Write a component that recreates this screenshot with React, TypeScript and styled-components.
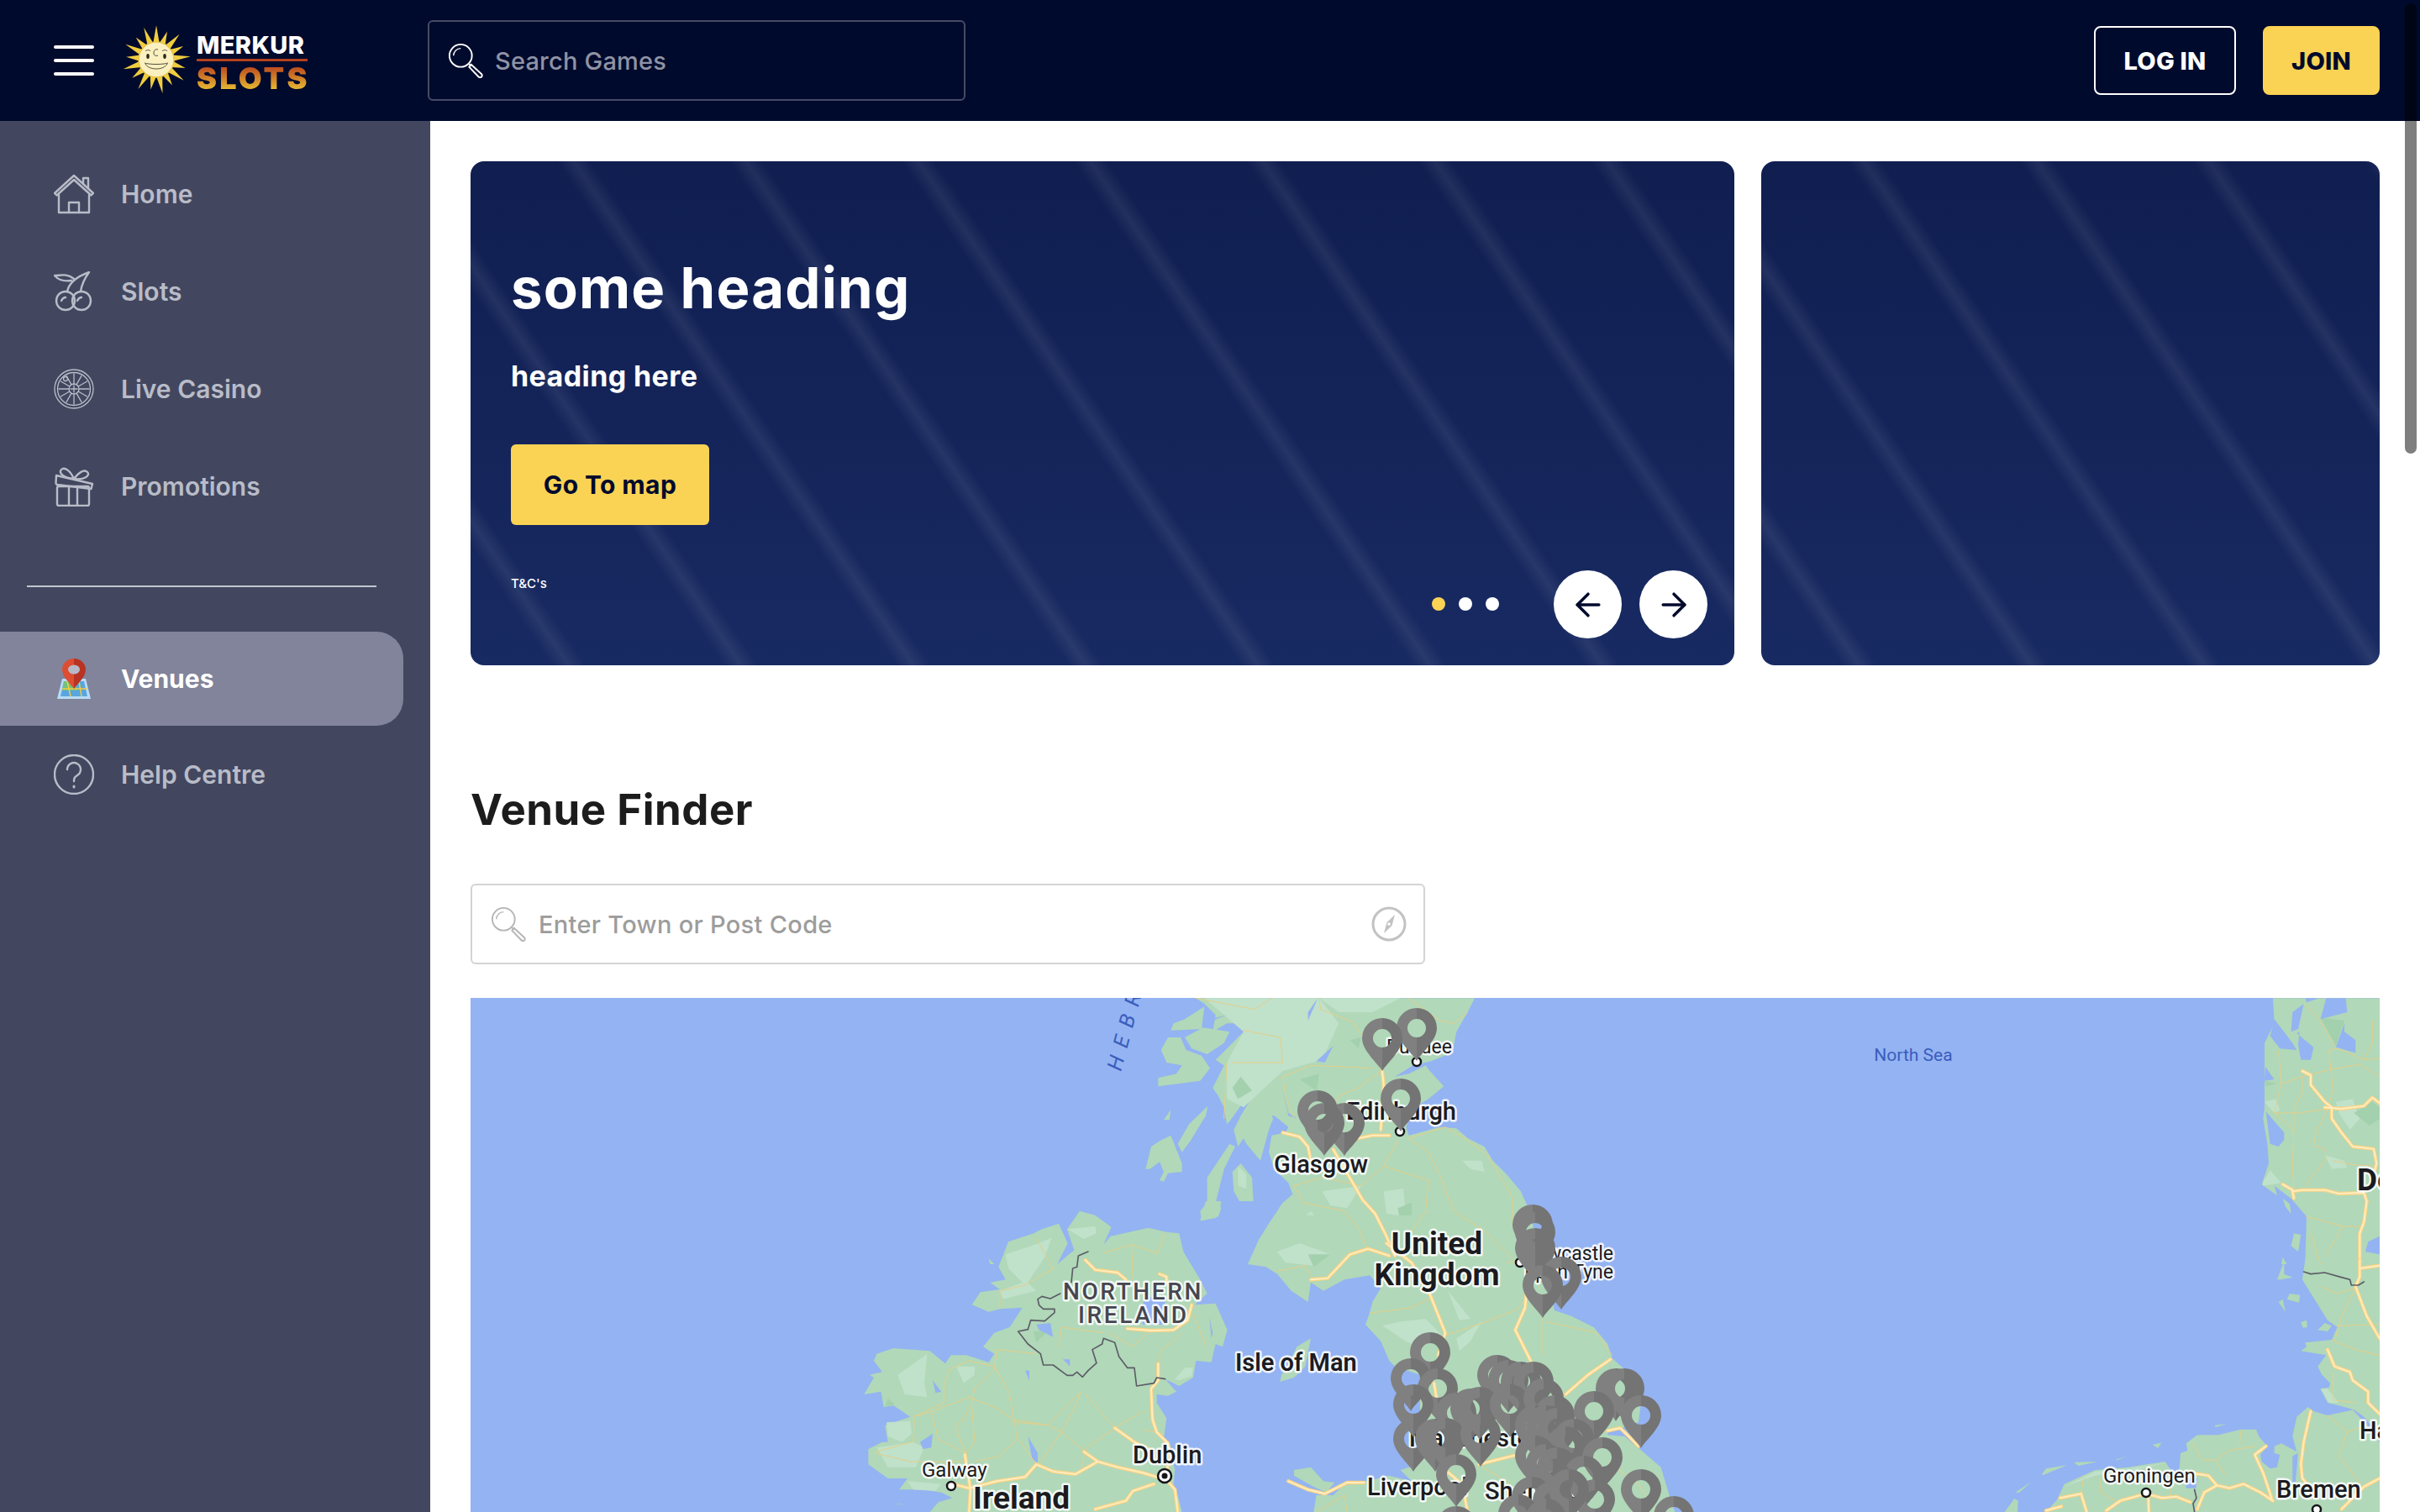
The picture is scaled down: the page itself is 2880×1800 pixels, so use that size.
import styled, { createGlobalStyle } from 'styled-components';
import { ArrowLeft, ArrowRight } from 'lucide-react';

const GlobalStyle = createGlobalStyle`
  html, body {
    margin: 0;
    padding: 0;
    width: 2880px;
    height: 1800px;
    overflow: hidden;
    background: #fff;
    font-family: Inter, "Liberation Sans", sans-serif;
  }
  * { box-sizing: border-box; }
`;

const Page = styled.div`
  position: relative;
  width: 2880px;
  height: 1800px;
  display: flex;
  flex-direction: column;
  overflow: hidden;
`;

const Header = styled.header`
  height: 144px;
  flex: none;
  background: #000a2c;
  display: flex;
  align-items: center;
  padding: 0 48px 0 64px;
`;

const Burger = styled.div`
  width: 48px;
  display: flex;
  flex-direction: column;
  gap: 12px;
  margin-right: 32px;
`;

const BurgerLine = styled.span`
  height: 4px;
  border-radius: 2px;
  background: #fff;
`;

const Logo = styled.div`
  display: flex;
  align-items: center;
  gap: 6px;
  width: 365px;
`;

const LogoWords = styled.div`
  display: flex;
  flex-direction: column;
  width: 132px;
  padding-top: 4px;
`;

const LogoTop = styled.span`
  color: #fff;
  font-size: 29px;
  line-height: 26px;
  font-weight: 800;
  letter-spacing: 0.4px;
  white-space: nowrap;
`;

const LogoRule = styled.span`
  height: 3px;
  margin: 3px 0 6px;
  background: #b5401c;
`;

const LogoBottom = styled.span`
  font-size: 36px;
  line-height: 28px;
  font-weight: 900;
  letter-spacing: 3.2px;
  white-space: nowrap;
  background: linear-gradient(180deg, #b9481f 0%, #e8bb33 100%);
  -webkit-background-clip: text;
  background-clip: text;
  color: transparent;
`;

const HeaderSearch = styled.div`
  width: 640px;
  height: 96px;
  border: 2px solid #474c66;
  border-radius: 6px;
  display: flex;
  align-items: center;
  gap: 14px;
  padding-left: 22px;
`;

const HeaderSearchText = styled.span`
  color: #8f93a5;
  font-size: 29px;
  font-weight: 500;
  letter-spacing: 0.2px;
`;

const HeaderActions = styled.div`
  margin-left: auto;
  display: flex;
  gap: 32px;
`;

const HeaderButton = styled.div<{ $primary?: boolean }>`
  height: 82px;
  width: ${(p) => (p.$primary ? '139px' : '169px')};
  border-radius: 8px;
  display: flex;
  align-items: center;
  justify-content: center;
  font-size: 29px;
  font-weight: 800;
  letter-spacing: 0.2px;
  background: ${(p) => (p.$primary ? '#fad355' : 'transparent')};
  color: ${(p) => (p.$primary ? '#000a2c' : '#fff')};
  border: 2px solid ${(p) => (p.$primary ? '#fad355' : '#fff')};
`;

const Body = styled.div`
  flex: 1;
  display: flex;
  min-height: 0;
`;

const Sidebar = styled.nav`
  width: 512px;
  flex: none;
  background: #42475f;
  padding-top: 29px;
`;

const NavItem = styled.div<{ $active?: boolean }>`
  height: ${(p) => (p.$active ? '112px' : '116px')};
  width: 480px;
  padding-left: 64px;
  display: flex;
  align-items: center;
  gap: 32px;
  font-size: 30px;
  font-weight: ${(p) => (p.$active ? 700 : 600)};
  color: ${(p) => (p.$active ? '#fff' : '#b9bcc8')};
  background: ${(p) => (p.$active ? '#81849a' : 'transparent')};
  border-radius: ${(p) => (p.$active ? '0 32px 32px 0' : '0')};
`;

const NavIcon = styled.svg`
  width: 48px;
  height: 48px;
  flex: none;
  fill: none;
  stroke: #b9bcc8;
  stroke-width: 2.4;
  stroke-linejoin: round;
  stroke-linecap: round;
`;

const NavDivider = styled.div`
  height: 2px;
  width: 416px;
  margin: 60px 0 53px 32px;
  background: #c3c5d0;
`;

const Main = styled.main`
  flex: 1;
  min-width: 0;
  display: flex;
  flex-direction: column;
  padding: 48px 48px 0;
`;

const BannerRow = styled.section`
  display: flex;
  gap: 32px;
  height: 600px;
  flex: none;
`;

const Banner = styled.div<{ $wide?: boolean }>`
  position: relative;
  flex: ${(p) => (p.$wide ? '0 0 1504px' : '1')};
  border-radius: 16px;
  overflow: hidden;
  padding: 0 48px;
  color: #fff;
  background:
    repeating-linear-gradient(
      56deg,
      rgba(255, 255, 255, 0) 0,
      rgba(255, 255, 255, 0) 80px,
      rgba(255, 255, 255, 0.075) 97px,
      rgba(255, 255, 255, 0) 114px,
      rgba(255, 255, 255, 0) 170px
    ),
    linear-gradient(180deg, #101e50 0%, #182a62 100%);
`;

const BannerTitle = styled.h1`
  margin: 0;
  padding-top: 108px;
  font-size: 67px;
  line-height: 86px;
  font-weight: 700;
  letter-spacing: 1.2px;
`;

const BannerSub = styled.h2`
  margin: 42px 0 0;
  font-size: 34px;
  line-height: 40px;
  font-weight: 700;
  letter-spacing: 0.4px;
`;

const BannerButton = styled.div`
  margin-top: 61px;
  width: 236px;
  height: 96px;
  border-radius: 6px;
  background: #fad355;
  color: #000a2c;
  font-size: 30px;
  font-weight: 700;
  letter-spacing: 0.4px;
  display: flex;
  align-items: center;
  justify-content: center;
`;

const BannerTerms = styled.p`
  margin: 60px 0 0;
  font-size: 15px;
  line-height: 20px;
  font-weight: 500;
`;

const Dots = styled.div`
  position: absolute;
  left: 1144px;
  top: 519px;
  display: flex;
  gap: 16px;
`;

const Dot = styled.span<{ $on?: boolean }>`
  width: 16px;
  height: 16px;
  border-radius: 50%;
  background: ${(p) => (p.$on ? '#fad355' : '#fff')};
`;

const Arrows = styled.div`
  position: absolute;
  right: 32px;
  top: 487px;
  display: flex;
  gap: 21px;
`;

const ArrowButton = styled.div`
  width: 81px;
  height: 81px;
  border-radius: 50%;
  background: #fff;
  color: #000a2c;
  display: flex;
  align-items: center;
  justify-content: center;
`;

const SectionTitle = styled.h2`
  margin: 142px 0 0;
  font-size: 51px;
  line-height: 60px;
  font-weight: 700;
  letter-spacing: 0.5px;
  color: #1c1c1c;
`;

const FinderInput = styled.div`
  margin-top: 58px;
  width: 1136px;
  height: 96px;
  flex: none;
  border: 2px solid #d3d3d3;
  border-radius: 6px;
  display: flex;
  align-items: center;
  padding: 0 20px 0 22px;
  gap: 15px;
`;

const FinderText = styled.span`
  flex: 1;
  color: #9c9c9c;
  font-size: 29px;
  font-weight: 500;
  letter-spacing: 0.3px;
`;

const MapFrame = styled.div`
  margin-top: 40px;
  flex: 1;
  min-height: 0;
  overflow: hidden;
  background: #94b3f2;
`;

const MapSvg = styled.svg`
  display: block;
  width: 2272px;
  height: 612px;
`;

const MapLabel = styled.text<{ $size: number; $weight?: number; $color?: string; $spacing?: number }>`
  font-family: Roboto, "Liberation Sans", sans-serif;
  font-size: ${(p) => p.$size}px;
  font-weight: ${(p) => p.$weight ?? 500};
  fill: ${(p) => p.$color ?? '#1b1b1f'};
  letter-spacing: ${(p) => p.$spacing ?? 0}px;
  stroke: rgba(255, 255, 255, 0.85);
  stroke-width: 5px;
  stroke-linejoin: round;
  paint-order: stroke;
`;

const Scrollbar = styled.div`
  position: absolute;
  top: 4px;
  right: 4px;
  width: 14px;
  height: 536px;
  border-radius: 7px;
  background: rgba(0, 0, 0, 0.5);
`;

const Magnifier = ({ color, size }: { color: string; size: number }) => (
  <svg width={size} height={size} viewBox="0 0 44 44" fill="none" stroke={color} strokeWidth="2">
    <circle cx="16" cy="16" r="14" />
    <path d="M7 16a9 9 0 0 1 9-9" strokeWidth="1.4" />
    <path d="M26 26l3 3" />
    <path d="M29 27l13 12a2.4 2.4 0 0 1-3.6 3.4L26.5 30z" />
  </svg>
);

const Compass = () => (
  <svg width="42" height="42" viewBox="0 0 42 42" fill="none">
    <circle cx="21" cy="21" r="19" stroke="#c2c2c2" strokeWidth="3" />
    <path d="M28 10l-3.500 13L15 32l3.500-13z" fill="#c2c2c2" />
    <circle cx="21" cy="21" r="1.800" fill="#fff" />
  </svg>
);

const sunSpikes = Array.from({ length: 17 }, (_, i) => {
  const step = (Math.PI * 2) / 17;
  const a = i * step - Math.PI / 2;
  const outer = i % 2 === 0 ? 41 : 36;
  const p = (r: number, t: number) =>
    `${(42 + r * Math.cos(t)).toFixed(1)},${(40 + r * Math.sin(t)).toFixed(1)}`;
  return `${p(20, a - step / 2)} ${p(outer, a)} ${p(20, a + step / 2)}`;
});

const SunLogo = () => (
  <svg width="84" height="82" viewBox="0 0 84 82">
    {sunSpikes.map((pts) => (
      <polygon key={pts} points={pts} fill="#f0cd3f" />
    ))}
    <circle cx="42" cy="40" r="21" fill="#fbf0c0" stroke="#e8c548" strokeWidth="1.4" />
    <g fill="none" stroke="#2c2a1c" strokeWidth="0.8">
      <path d="M29 30c2-2 5-2 6 0M49 30c2-2 5-2 6 0" />
      <path d="M44 28c-3-1-5 1-5 4s2 4 5 3" />
      <path d="M28 44c6 2 22 2 28 0M29 45c4 8 22 8 26 0" />
    </g>
    <ellipse cx="32" cy="36" rx="1.8" ry="3" fill="#2c2a1c" />
    <ellipse cx="52" cy="36" rx="1.8" ry="3" fill="#2c2a1c" />
  </svg>
);

const HomeIcon = () => (
  <NavIcon viewBox="0 0 48 48">
    <path d="M1 23L24 2l23 21-2.500 2.500L24 7 3.500 25.500z" />
    <path d="M35 12V5h6v12.500" />
    <path d="M6 25v21h36V25" />
    <path d="M18 46V34h12v12" />
  </NavIcon>
);

const CherryIcon = () => (
  <NavIcon viewBox="0 0 48 48">
    <circle cx="14" cy="35" r="11" />
    <circle cx="33" cy="35" r="11" />
    <path d="M9 35c1-2 3-4 5-4M28 35c1-2 3-4 5-4" />
    <path d="M16 24C18 14 28 6 42 1C37 8 33 16 32 24" />
    <path d="M24 9C16 2 8 5 1 5c6 7 13 7 20 6" />
  </NavIcon>
);

const spokes = [0, 30, 60, 90, 120, 150, 180, 210, 240, 270, 300, 330];

const RouletteIcon = () => (
  <NavIcon viewBox="0 0 48 48" style={{ strokeWidth: 1.3 }}>
    <circle cx="24" cy="24" r="23" />
    <circle cx="24" cy="24" r="19.500" />
    <circle cx="24" cy="24" r="6" />
    {spokes.map((deg) => (
      <path key={deg} d="M24 18V6" transform={`rotate(${deg} 24 24)`} />
    ))}
    <path d="M24 20v8M20 24h8" />
    <circle cx="14" cy="12" r="2.500" />
  </NavIcon>
);

const GiftIcon = () => (
  <NavIcon viewBox="0 0 48 48">
    <rect x="4" y="24" width="38" height="23" rx="2" />
    <path d="M18 24v23M28 24v23" />
    <path d="M3 11l43 10-1.500 6L4 22a2 2 0 0 1-1.500-2z" />
    <path d="M24 15C20 6 13 0 9 4s3 10 15 11zM24 15C29 8 36 3 40 7s-4 10-16 8z" />
  </NavIcon>
);

const HelpIcon = () => (
  <NavIcon viewBox="0 0 48 48">
    <circle cx="24" cy="24" r="23" />
    <path d="M16 18a8 8 0 1 1 12 7c-3 2-4 3-4 7" />
    <path d="M24 38v1" strokeWidth="3" />
  </NavIcon>
);

const VenueIcon = () => (
  <svg width="48" height="48" viewBox="0 0 48 48">
    <path d="M10 24h28l6 24H4z" fill="#b9dcf5" />
    <path d="M12 27h24l4 18H8z" fill="#58a6de" />
    <path d="M12 27h14l2 11H10z" fill="#6fc27b" />
    <path d="M16 27l4 18M30 27l3 18M10 36h30" stroke="#f2cc46" strokeWidth="1.500" fill="none" />
    <path d="M24 0c8 0 14 6 14 13 0 9-10 17-14 23z" fill="#b93322" />
    <path d="M24 0c-8 0-14 6-14 13 0 9 10 17 14 23z" fill="#dc4d32" />
    <ellipse cx="24" cy="13" rx="7" ry="5.500" fill="#b7b9c6" />
  </svg>
);

const Pin = ({ x, y }: { x: number; y: number }) => (
  <g transform={`translate(${x} ${y})`}>
    <path d="M0 0C-5-9-24-24-24-39A24 24 0 0 1 0-63V-50A11 11 0 0 0 0-28Z" fill="#808080" />
    <path d="M0 0C5-9 24-24 24-39A24 24 0 0 0 0-63V-50A11 11 0 0 1 0-28Z" fill="#747474" />
  </g>
);

const CityDot = ({ x, y, capital }: { x: number; y: number; capital?: boolean }) => (
  <g>
    <circle cx={x} cy={y} r={capital ? 8 : 5} fill="#fff" stroke="#16161a" strokeWidth="2.5" />
    {capital && <circle cx={x} cy={y} r="3.500" fill="#16161a" />}
  </g>
);

interface MapRegion {
  x: number;
  y: number;
  land: string[];
  light?: string[];
  dark?: string[];
  water?: string[];
  thin?: string[];
  thick?: string[];
  borders?: string[];
}

// outlines are in 3x crop units, each region has its own origin
const mapRegions: MapRegion[] = [
  {
    x: 1020,
    y: 1430,
    land: [
      '540,145 630,115 660,100 720,80 752,150 715,225 750,195 775,175 750,100 795,35 850,50 908,92 880,155 905,125 1040,95 1105,110 1150,115 1165,180 1195,230 1225,280 1250,330 1205,370 1280,365 1322,460 1305,520 1280,510 1265,575 1210,570 1200,630 1150,660 1100,635 1140,680 1110,695 1070,690 1070,720 1105,775 1095,850 1120,900 1135,960 1130,1010 1145,1050 1160,1110 260,1110 290,1075 340,1060 300,1040 240,1030 150,1030 180,990 110,990 40,940 40,885 90,860 110,860 100,800 190,770 130,730 95,735 85,680 25,690 60,630 45,620 90,610 60,570 70,545 130,525 260,535 315,580 335,550 390,550 470,575 490,545 450,520 490,470 545,450 590,380 510,385 470,395 410,370 440,325 510,315 475,290 530,280 505,235',
      '470,205 490,225 475,225',
      '1225,70 1245,0 1300,0 1295,40 1280,60',
      '150,1080 170,1085 135,1080',
    ],
    light: [
      '530,190 650,150 695,130 670,200 610,290 640,320 520,350 510,320 590,290 540,240',
      '750,100 850,90 855,115 810,135',
      '145,620 250,545 240,650 250,700 170,690',
      '105,790 190,785 195,830 160,860 110,840',
      '70,880 200,860 240,880 210,950 110,950',
      '355,590 420,590 420,620 380,650',
      '180,1000 300,1010 280,1035 200,1030',
      '1135,635 1170,595 1200,595 1195,625 1150,640',
    ],
    dark: ['110,705 135,725 100,735', '630,465 680,465 640,505'],
    water: [
      '640,440 690,435 700,485 650,460',
      '600,605 615,605 615,640',
      '270,640 300,680 280,685',
      '610,840 645,900 645,935 625,920',
      '225,860 270,830 265,880 235,885',
      '1030,340 1100,350 1100,440 1020,440 1010,395',
      '1258,415 1270,470 1265,490',
      '735,565 760,565 760,590',
    ],
    thin: [
      '490,590 520,640 545,690 570,840 640,940',
      '490,600 420,670 405,740 350,810 390,900',
      '800,680 775,740 730,825 650,940',
      '800,680 680,800 560,780',
      '815,690 920,810',
      '700,240 660,170 640,130',
      '510,380 510,320 600,300 700,240',
      '980,155 985,280',
      '1070,190 1100,115',
      '880,185 980,155 1070,185',
      '490,590 400,570 330,600 310,660 310,720 200,770',
      '200,770 270,750 400,700 500,740 570,790 680,800 730,825 810,890',
      '900,470 985,520 1040,470',
      '720,520 730,450 880,470',
      '1070,590 1090,530 1160,470',
      '1200,400 1245,520',
      '490,600 500,530 640,545',
      '65,895 200,860 205,780',
      '65,900 190,930 380,930',
      '265,750 290,850 390,900 420,860 410,740',
      '570,850 510,910 420,930',
      '1020,750 920,810 820,880 800,950',
      '1020,815 1090,830',
    ],
    thick: [
      '965,455 1050,462 1130,460 1180,425 1195,370',
      '1080,260 1105,270 1105,290',
      '815,210 850,245 930,255 960,280',
      '1075,580 1075,640 1050,670 1055,780 1070,825 1110,865 1120,920 1095,985',
      '920,810 990,860 1040,885',
      '810,895 860,930 930,950 1020,970 1070,985',
      '860,930 780,975 700,965 640,940 600,985 500,1000 400,1025 340,1010',
      '385,905 405,1030 400,1110',
      '1095,985 1135,1030 1145,1110',
      '1060,1010 985,1035 960,1070 850,1100',
    ],
    borders: [
      '825,180 790,195 785,235 770,240 765,290',
      '725,330 690,348 660,340 645,350 650,372 665,385 705,385 705,398 670,428 620,425 610,458 575,465 610,510 655,545 665,585 700,585 750,622 770,622 785,610 805,628 825,605 855,578 840,530 875,510 880,490 920,505 935,555 965,595 990,595 998,660 1060,650 1070,630 1100,635',
    ],
  },
  {
    x: 1300,
    y: 1185,
    land: [
      '370,10 1365,10 1340,60 1300,130 1290,180 1270,210 1210,235 1145,250 1080,290 1130,280 1190,250 1205,270 1255,325 1200,370 1150,400 1120,470 1130,500 1240,470 1300,475 1340,510 1400,540 1430,590 1480,640 1530,700 1570,790 1590,960 555,960 600,920 590,880 640,800 680,740 715,710 700,670 650,620 630,560 640,500 690,490 700,470 650,430 630,480 600,590 550,530 540,510 520,540 505,480 530,430 560,380 600,340 540,380 490,450 480,460 470,400 450,360 430,330 470,250 440,230 500,170 540,130 570,70 530,100 480,100 430,130 440,70 400,30',
      '490,530 410,650 410,740 385,770 390,805 450,790 460,760 440,740 470,620 510,540',
      '500,630 530,600 570,650 575,735 525,735 505,700',
      '245,195 270,150 315,150 335,195 390,215 420,260 385,305 235,325 235,295 300,280 320,250 265,240',
      '330,150 395,115 490,130 470,170 410,210 355,190',
      '290,100 330,85 400,40 390,120 280,125',
      '305,530 345,460 412,395 405,430 350,520 320,560',
      '190,620 210,540 240,520 280,500 320,600 320,630 270,635 255,665 240,660 255,630 240,595 205,620',
      '255,445 280,408 275,445',
    ],
    light: [
      '400,10 810,10 880,100 820,230 680,270 540,400 480,370 480,240 540,130',
      '810,10 1100,10 1000,60 880,60',
      '520,610 550,640 550,690 520,680',
      '820,700 960,680 910,760 850,750',
      '1040,700 1110,690 1120,790 1050,780',
      '660,880 780,770 850,850 760,930 690,900',
      '1320,590 1390,590 1400,630 1350,620',
    ],
    dark: [
      '500,330 530,290 570,340 520,370',
      '740,300 810,280 800,340',
      '920,160 960,150 950,190',
      '1090,760 1140,740 1140,820 1100,810',
      '680,880 740,930 690,950',
    ],
    water: [
      '770,60 805,10 770,90',
      '800,235 860,180 830,240',
      '680,330 700,420 730,440 700,430',
      '640,430 660,470 640,490 650,430',
      '430,90 480,70 440,80',
    ],
    thin: [
      '810,10 815,50 930,95 960,140 1030,265',
      '1030,270 950,330 880,360 860,400',
      '1130,510 1200,560 1240,640 1290,770 1400,840 1510,950',
      '1130,510 1260,470 1330,510 1410,570 1500,720 1500,800 1530,900',
      '1090,520 1040,610 960,680 820,650 720,680 750,740 900,770 950,830 980,900',
      '1040,610 1200,660 1190,770 1130,860',
      '500,240 680,240 670,150 540,125',
      '680,290 780,250 1000,260',
      '680,290 690,360 720,440',
      '470,440 480,240',
      '370,10 580,50 640,10',
      '1340,60 1290,100 1240,90 1130,10',
    ],
    thick: [
      '680,490 740,505 770,540 780,590',
      '860,550 930,670 965,730 1010,780 1050,860 1080,930',
      '900,520 1000,500 1060,500',
      '1035,270 1040,320 1030,480',
    ],
  },
  {
    x: 1520,
    y: 1480,
    land: [
      '-105,75 -40,85 0,110 50,170 110,210 120,140 165,170 240,130 330,115 370,160 340,210 330,250 315,290 370,350 400,420 420,440 510,470 510,780 470,800 440,810 480,850 400,830 320,850 250,850 200,900 170,900 140,900 130,960 1420,960 1400,900 1370,800 1300,740 1250,690 1180,680 1230,660 1290,640 1300,560 1240,450 1195,410 1180,360 1130,300 1050,260 990,240 960,100 930,0 900,-100 0,-100 -21,-84 -69,-6',
      '60,810 120,800 165,850 205,855 175,890 130,870 60,830',
      '10,495 60,480 100,440 120,340 70,370 40,430 15,470',
    ],
    light: [
      '375,295 440,280 530,270 590,330 500,370 460,350',
      '610,170 690,270 650,275',
      '640,340 730,280 690,350 650,385',
      '0,30 80,0 190,40 130,80 30,70',
    ],
    dark: ['110,40 190,40 130,85'],
    water: ['1180,670 1230,665 1280,725 1240,690 1180,685'],
    thin: [
      '330,250 480,230 560,190',
      '600,330 720,290 850,240 890,200',
      '945,270 945,400',
      '960,280 1140,320 1195,400',
      '0,100 100,80 130,130',
      '820,70 890,60',
      '850,0 870,70',
      '720,790 830,860 830,960',
      '1180,780 1290,860 1350,960',
      '140,960 240,900 250,960',
    ],
    thick: [
      '390,0 480,70 540,170 600,320 575,400',
      '850,310 905,420',
      '895,110 885,230 850,310',
      '120,130 180,125 260,40 325,20 400,45',
      '40,850 110,880 170,895 250,855 310,855',
      '600,810 660,860 680,960',
      '720,790 860,755',
      '1030,540 1110,470 1190,415',
      '1180,670 1225,660 1290,725',
      '560,500 570,560',
    ],
  },
  {
    x: 2400,
    y: 1185,
    land: [
      '915,10 920,100 885,170 885,400 880,440 895,530 900,600 875,675 930,715 920,680 980,725 1035,790 1030,960 1296,960 1296,10',
      '990,850 1015,855 1005,915 980,895',
      '950,725 975,745 980,780 960,755',
      '950,935 965,960 945,960',
    ],
    light: ['885,380 925,370 940,410 920,420', '1140,380 1200,370 1225,440 1190,480 1150,420', '1100,570 1170,590 1180,615 1125,620', '905,625 945,670 880,680 880,665'],
    dark: ['1205,420 1270,380 1296,400 1296,440 1260,465', '1085,80 1170,90 1140,180', '885,305 930,315 890,325'],
    water: [
      '920,85 985,170 1000,195 940,190 905,145',
      '1000,135 1060,185 1050,230 1015,230 1005,175 1010,130',
      '1030,10 1080,10 1035,25',
      '1105,10 1175,10 1180,60 1085,85',
      '1170,130 1210,160 1210,205 1140,185 1170,100',
      '888,255 920,300 885,305',
      '890,415 955,490 955,515 935,540 905,530',
      '985,60 1025,30 1005,120 980,130',
      '1255,880 1296,860 1296,925 1245,915',
    ],
    thin: [
      '935,200 945,310 920,420 990,480 985,620 990,690',
      '945,315 1020,290 1120,265 1225,245 1296,290',
      '1020,290 1020,350 990,405 990,480',
      '920,420 1010,420 1110,405 1070,490 1060,535 1100,550 1105,585 1030,680',
      '1115,200 1130,340 1110,400',
      '1115,195 1150,190 1240,230 1296,225',
      '1035,790 1165,825 1225,825',
      '1165,825 1105,925',
      '1050,850 1085,960',
      '1270,90 1270,170 1240,230',
      '1030,30 1080,85 1135,180',
      '1130,590 1200,605 1280,610',
    ],
    thick: [
      '1020,270 1050,285 1050,320 1100,380 1125,400 1125,440 1160,490 1200,540 1275,548 1285,600 1275,640',
      '1100,400 1160,405 1240,395 1270,365 1296,385',
      '985,700 1020,695 1100,695 1150,708 1240,705 1250,735 1240,810 1225,850 1225,960',
      '985,700 990,725',
      '950,675 985,695',
    ],
  },
  {
    x: 2320,
    y: 1500,
    land: [
      '1270,0 1260,70 1350,215 1385,240 1365,285 1270,295 1275,310 1255,325 1345,340 1315,380 1330,410 1360,440 1355,455 1325,460 1350,510 1390,520 1445,535 1480,560 1536,625 1536,0',
      '1280,525 1300,540 1350,555 1440,535 1500,600 1536,650 1536,900 345,900 385,855 410,800 520,750 640,740 770,720 790,750 820,760 825,690 850,680 845,655 885,625 960,625 1040,605 1095,605 1105,630 1135,665 1110,695 1115,720 1145,745 1170,740 1180,695 1160,690 1160,665 1185,655 1240,685 1225,630 1240,560',
      '330,765 345,745 420,732 335,768',
      '445,722 530,720 460,735',
      '590,715 635,700 600,715',
      '725,660 757,652 745,672',
      '948,590 990,585 950,598',
      '235,830 292,793 250,830',
      '197,900 232,852 245,860 243,900',
      '1170,70 1195,5 1195,50 1225,62 1185,70',
      '1205,140 1215,120 1252,125 1248,152',
      '1175,150 1190,140 1200,185',
      '1255,222 1275,215 1278,240 1262,242',
      '1315,250 1340,225 1365,235 1350,255',
    ],
    light: ['1325,460 1350,460 1390,510 1355,510', '410,810 520,755 640,745 770,725 640,755 520,770'],
    water: ['845,780 885,780 880,815 845,815', '1225,700 1245,690 1235,800 1225,800'],
    thin: [
      '865,650 905,715 950,715 985,770',
      '950,715 1000,680 1090,665',
      '1040,610 1035,665',
      '1350,555 1420,615 1490,590',
      '1420,615 1390,700 1470,800',
      '1375,290 1450,320 1536,340',
      '1375,290 1390,235 1536,230',
      '1330,95 1380,120 1450,100 1400,200 1390,235',
      '540,780 540,830 590,860',
      '480,770 470,830',
      '780,760 790,840',
      '1370,400 1370,500 1450,510',
    ],
    thick: [
      '1465,0 1465,60 1450,95 1490,200 1536,280',
      '1465,30 1536,20',
      '1350,320 1375,380 1430,400 1440,430 1495,470 1495,510 1536,550',
      '1290,540 1265,650 1255,730 1260,780 1300,830',
      '1130,665 1090,695 1120,760 1150,850',
      '860,760 925,770 955,805 1000,815 1050,800 1110,830 1155,860',
      '955,805 910,830 885,890',
      '395,850 470,835 490,900',
      '560,895 610,860 700,835 760,850 810,845 860,865',
      '710,850 712,900',
      '345,895 400,880',
      '1400,890 1480,810 1536,780',
    ],
    borders: [
      '1265,42 1290,50 1340,45 1400,62 1430,70 1435,90 1460,90 1480,78',
      '875,820 882,850 870,870 875,900',
    ],
  },
];

const regionTransform = (r: MapRegion) => `translate(${r.x} ${r.y}) scale(0.3333)`;

const pinHeads: [number, number][] = [
  [545, 390], [478, 483], [572, 520], [485, 575], [785, 470], [825, 490], [870, 495], [915, 495],
  [640, 605], [690, 590], [722, 585], [830, 575], [950, 555], [990, 615], [1210, 520], [1240, 520],
  [1130, 600], [1300, 615], [920, 650], [960, 650], [1000, 660], [1060, 700], [1030, 725], [485, 700],
  [565, 700], [600, 695], [725, 680], [1160, 765], [920, 760], [960, 790], [1000, 800], [1095, 830],
  [640, 825], [985, 850], [1300, 880], [910, 905], [1135, 915], [985, 920], [1040, 880], [1415, 975],
  [860, 970], [960, 985], [640, 1010],
];

const pinTips: [number, number][] = [
  [1686, 1263], [1645, 1275], [1667, 1347], [1600, 1376], [1568, 1361], [1576, 1376],
  [1824, 1497], [1827, 1506], [1827, 1525], [1858, 1559], [1836, 1569],
  ...pinHeads.map(([hx, hy]): [number, number] => [
    Math.round(1520 + hx / 3),
    Math.round(1480 + hy / 3 + 39),
  ]),
];

const VenueMap = () => (
  <MapSvg viewBox="560 1188 2272 612">
    {mapRegions.map((r) => (
      <g key={`land-${r.x}`} transform={regionTransform(r)}>
        {r.land.map((pts) => (
          <polygon key={pts} points={pts} fill="#b1d8b9" />
        ))}
        {r.light?.map((pts) => (
          <polygon key={pts} points={pts} fill="#c0e1ca" />
        ))}
        {r.dark?.map((pts) => (
          <polygon key={pts} points={pts} fill="#a3d0ad" />
        ))}
        {r.water?.map((pts) => (
          <polygon key={pts} points={pts} fill="#94b3f2" />
        ))}
      </g>
    ))}
    {mapRegions.map((r) => (
      <g key={`roads-${r.x}`} transform={regionTransform(r)} fill="none" strokeLinejoin="round" strokeLinecap="round">
        {r.thin?.map((pts) => (
          <polyline key={pts} points={pts} stroke="#e5cf88" strokeWidth="3" />
        ))}
        {r.thick?.map((pts) => (
          <polyline key={pts} points={pts} stroke="#fbd382" strokeWidth="13" />
        ))}
        {r.thick?.map((pts) => (
          <polyline key={pts} points={pts} stroke="#ffedc0" strokeWidth="6" />
        ))}
        {r.borders?.map((pts) => (
          <polyline key={pts} points={pts} stroke="#5c5d66" strokeWidth="5" />
        ))}
      </g>
    ))}

    <MapLabel x="2277" y="1263" textAnchor="middle" $size={21} $weight={400} $color="#3a5dbd" style={{ stroke: 'none' }}>
      North Sea
    </MapLabel>
    <MapLabel
      transform="translate(1334 1276) rotate(-75)"
      $size={25}
      $weight={400}
      $color="#3a5dbd"
      $spacing={11}
      fontStyle="italic"
      style={{ stroke: 'none' }}
    >
      HEBRIDES
    </MapLabel>
    <MapLabel x="1265" y="1547" $size={28} $color="#45464f" $spacing={2.6}>NORTHERN</MapLabel>
    <MapLabel x="1283" y="1575" $size={28} $color="#45464f" $spacing={2.6}>IRELAND</MapLabel>
    <MapLabel x="1470" y="1632" $size={29} $weight={600}>Isle of Man</MapLabel>
    <MapLabel x="1602" y="1333" $size={29}>Edinburgh</MapLabel>
    <MapLabel x="1516" y="1396" $size={29}>Glasgow</MapLabel>
    <MapLabel x="1650" y="1254" $size={23} $weight={400}>Dundee</MapLabel>
    <MapLabel x="1710" y="1493" textAnchor="middle" $size={37} $weight={700}>United</MapLabel>
    <MapLabel x="1710" y="1530" textAnchor="middle" $size={37} $weight={700}>Kingdom</MapLabel>
    <MapLabel x="1920" y="1500" textAnchor="end" $size={23} $weight={400}>Newcastle</MapLabel>
    <MapLabel x="1920" y="1522" textAnchor="end" $size={23} $weight={400}>upon Tyne</MapLabel>
    <MapLabel x="1348" y="1742" $size={29}>Dublin</MapLabel>
    <MapLabel x="1097" y="1758" $size={24} $weight={400}>Galway</MapLabel>
    <MapLabel x="1158" y="1796" $size={37} $weight={700}>Ireland</MapLabel>
    <MapLabel x="1627" y="1780" $size={29}>Liverpool</MapLabel>
    <MapLabel x="1677" y="1722" $size={29}>Manchester</MapLabel>
    <MapLabel x="1767" y="1785" $size={29}>Sheffield</MapLabel>
    <MapLabel x="2503" y="1765" $size={24} $weight={400}>Groningen</MapLabel>
    <MapLabel x="2709" y="1783" $size={29}>Bremen</MapLabel>
    <MapLabel x="2808" y="1713" $size={29}>Hamburg</MapLabel>
    <MapLabel x="2805" y="1417" $size={37} $weight={700}>Denmark</MapLabel>

    <CityDot x={1132} y={1769} />
    <CityDot x={1386} y={1757} capital />
    <CityDot x={1686} y={1264} />
    <CityDot x={1666} y={1347} />
    <CityDot x={1809} y={1503} />
    <CityDot x={2554} y={1777} />
    <CityDot x={2757} y={1797} />

    {pinTips.map(([x, y]) => (
      <Pin key={`${x}-${y}`} x={x} y={y} />
    ))}
  </MapSvg>
);

const App = () => {
  return (
    <Page>
      <GlobalStyle />
      <Header>
        <Burger>
          <BurgerLine />
          <BurgerLine />
          <BurgerLine />
        </Burger>
        <Logo>
          <SunLogo />
          <LogoWords>
            <LogoTop>MERKUR</LogoTop>
            <LogoRule />
            <LogoBottom>SLOTS</LogoBottom>
          </LogoWords>
        </Logo>
        <HeaderSearch>
          <Magnifier color="#fff" size={42} />
          <HeaderSearchText>Search Games</HeaderSearchText>
        </HeaderSearch>
        <HeaderActions>
          <HeaderButton>LOG IN</HeaderButton>
          <HeaderButton $primary>JOIN</HeaderButton>
        </HeaderActions>
      </Header>
      <Body>
        <Sidebar>
          <NavItem><HomeIcon />Home</NavItem>
          <NavItem><CherryIcon />Slots</NavItem>
          <NavItem><RouletteIcon />Live Casino</NavItem>
          <NavItem><GiftIcon />Promotions</NavItem>
          <NavDivider />
          <NavItem $active><VenueIcon />Venues</NavItem>
          <NavItem><HelpIcon />Help Centre</NavItem>
        </Sidebar>
        <Main>
          <BannerRow>
            <Banner $wide>
              <BannerTitle>some heading</BannerTitle>
              <BannerSub>heading here</BannerSub>
              <BannerButton>Go To map</BannerButton>
              <BannerTerms>T&amp;C's</BannerTerms>
              <Dots>
                <Dot $on />
                <Dot />
                <Dot />
              </Dots>
              <Arrows>
                <ArrowButton><ArrowLeft size={44} strokeWidth={1.9} /></ArrowButton>
                <ArrowButton><ArrowRight size={44} strokeWidth={1.9} /></ArrowButton>
              </Arrows>
            </Banner>
            <Banner />
          </BannerRow>
          <SectionTitle>Venue Finder</SectionTitle>
          <FinderInput>
            <Magnifier color="#b5b5b5" size={42} />
            <FinderText>Enter Town or Post Code</FinderText>
            <Compass />
          </FinderInput>
          <MapFrame>
            <VenueMap />
          </MapFrame>
        </Main>
      </Body>
      <Scrollbar />
    </Page>
  );
};

export default App;
